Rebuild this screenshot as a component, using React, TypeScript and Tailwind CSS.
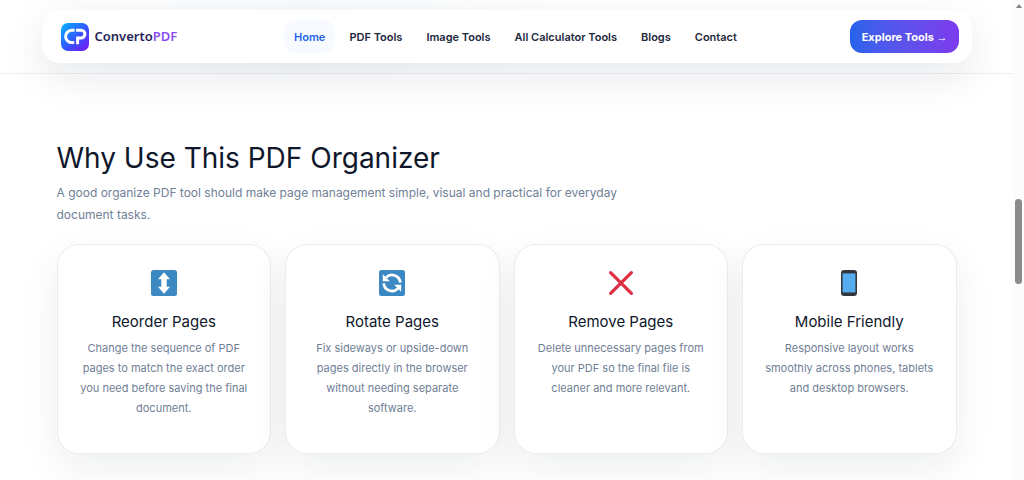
import type { ReactNode } from "react";

const links = ["Home", "PDF Tools", "Image Tools", "All Calculator Tools", "Blogs", "Contact"];

function Logo() {
  return (
    <svg viewBox="0 0 28 28" className="h-7 w-7" aria-hidden="true">
      <defs>
        <linearGradient id="logo-bg" x1="0" y1="0" x2="1" y2="1">
          <stop offset="0" stopColor="#06b6ff" />
          <stop offset="0.5" stopColor="#2f5bff" />
          <stop offset="1" stopColor="#7c12f0" />
        </linearGradient>
      </defs>
      <rect width="28" height="28" rx="7" fill="url(#logo-bg)" />
      <path
        d="M13.6 7.2H10.6A6.2 6.2 0 0 0 4.6 13.4A6.2 6.2 0 0 0 10.6 19.6H13.2"
        fill="none"
        stroke="#fff"
        strokeWidth="3"
      />
      <path
        d="M15 7.2H20A3.9 3.9 0 0 1 20 15H16.6V21.2"
        fill="none"
        stroke="#fff"
        strokeWidth="3"
      />
    </svg>
  );
}

function ReorderIcon() {
  return (
    <svg viewBox="0 0 26 26" className="h-[26px] w-[26px]" aria-hidden="true">
      <rect width="26" height="26" rx="2.5" fill="#3b88c3" />
      <path d="M13 2.3 19 9.2H15.7V16.8H19L13 23.7 7 16.8H10.3V9.2H7Z" fill="#fff" />
    </svg>
  );
}

function RotateIcon() {
  return (
    <svg viewBox="0 0 26 26" className="h-[26px] w-[26px]" aria-hidden="true">
      <rect width="26" height="26" rx="2.5" fill="#3b88c3" />
      <g fill="none" stroke="#fff" strokeWidth="2.8">
        <path d="M7 7.6A8.3 8.3 0 0 1 21.3 12.6" />
        <path d="M19 18.4A8.3 8.3 0 0 1 4.7 13.4" />
      </g>
      <path d="M3.8 4.2V11.2H10.8Z" fill="#fff" />
      <path d="M22.2 21.8V14.8H15.2Z" fill="#fff" />
    </svg>
  );
}

function RemoveIcon() {
  return (
    <svg viewBox="0 0 26 26" className="h-[26px] w-[26px]" aria-hidden="true">
      <path d="M2.6 2.6 23.4 23.4M23.4 2.6 2.6 23.4" stroke="#dd2e44" strokeWidth="3.2" strokeLinecap="round" />
    </svg>
  );
}

function PhoneIcon() {
  return (
    <svg viewBox="0 0 26 26" className="h-[26px] w-[26px]" aria-hidden="true">
      <rect x="5" y="0" width="16" height="26" rx="3" fill="#31373d" />
      <rect x="6.6" y="3.4" width="12.8" height="19" fill="#55acee" />
    </svg>
  );
}

interface Feature {
  title: string;
  text: string;
  icon: ReactNode;
}

const features: Feature[] = [
  {
    title: "Reorder Pages",
    text: "Change the sequence of PDF pages to match the exact order you need before saving the final document.",
    icon: <ReorderIcon />,
  },
  {
    title: "Rotate Pages",
    text: "Fix sideways or upside-down pages directly in the browser without needing separate software.",
    icon: <RotateIcon />,
  },
  {
    title: "Remove Pages",
    text: "Delete unnecessary pages from your PDF so the final file is cleaner and more relevant.",
    icon: <RemoveIcon />,
  },
  {
    title: "Mobile Friendly",
    text: "Responsive layout works smoothly across phones, tablets and desktop browsers.",
    icon: <PhoneIcon />,
  },
];

export default function App() {
  return (
    <div className="flex h-screen overflow-hidden bg-white font-['Inter',sans-serif]">
      <div className="min-w-0 flex-1">
        <header className="border-b border-slate-200/70 bg-linear-to-r from-white via-slate-50 via-30% to-white to-60% px-5 py-[10px]">
          <div className="mx-auto flex max-w-[930px] items-center justify-between rounded-[18px] bg-white py-[10px] pr-3 pl-[19px] shadow-[0_14px_40px_rgba(15,23,42,0.09)]">
            <a href="#" className="flex items-center gap-[6px] pr-1">
              <Logo />
              <span className="font-['Noto_Sans',sans-serif] text-[13px] font-semibold text-[#1e2558]">
                Converto<span className="text-[#8b4cf0]">PDF</span>
              </span>
            </a>

            <nav className="flex items-center gap-1">
              {links.map((link, i) => (
                <a
                  key={link}
                  href="#"
                  className={
                    i === 0
                      ? "rounded-xl bg-[#f7fbff] px-[10px] pt-[9px] pb-[7px] text-[11px] leading-[17px] font-semibold text-[#2563eb]"
                      : "rounded-xl px-[10px] pt-[9px] pb-[7px] text-[11px] leading-[17px] font-semibold text-slate-800"
                  }
                >
                  {link}
                </a>
              ))}
            </nav>

            <button
              type="button"
              className="rounded-xl bg-linear-to-r from-[#2563eb] to-[#7c3aed] px-3 pt-[9px] pb-[7px] text-[11px] leading-[17px] font-bold text-white"
            >
              Explore Tools <span className="font-['Liberation_Sans',sans-serif]">→</span>
            </button>
          </div>
        </header>

        <main className="mx-auto max-w-[940px] px-5 pt-[68px]">
          <h2 className="text-[28px] leading-8 text-slate-900">Why Use This PDF Organizer</h2>
          <p className="mt-2 max-w-[600px] text-[12px] leading-[22px] text-[#708096]">
            A good organize PDF tool should make page management simple, visual and practical for everyday
            document tasks.
          </p>

          <div className="mt-[18px] grid grid-cols-4 gap-[14px]">
            {features.map((f) => (
              <article
                key={f.title}
                className="flex flex-col items-center rounded-[22px] border border-slate-200/80 bg-white px-5 pt-[25px] pb-[35px] text-center shadow-[0_14px_40px_rgba(15,23,42,0.07)]"
              >
                {f.icon}
                <h3 className="mt-4 text-[15px] leading-5 text-slate-900">{f.title}</h3>
                <p className="mt-[6px] text-[11px] leading-5 text-[#708096]">{f.text}</p>
              </article>
            ))}
          </div>
        </main>
      </div>

      {/* Scroll track */}
      <div className="flex w-[11px] shrink-0 flex-col items-center bg-[#fcfcfc] pt-1" aria-hidden="true">
        <svg viewBox="0 0 8 4" className="h-1 w-2">
          <path d="M4 0 7 4H1Z" fill="#858585" />
        </svg>
        <div className="mt-[191px] h-[85px] w-[7px] rounded-full bg-[#8b8b8b]" />
      </div>
    </div>
  );
}
